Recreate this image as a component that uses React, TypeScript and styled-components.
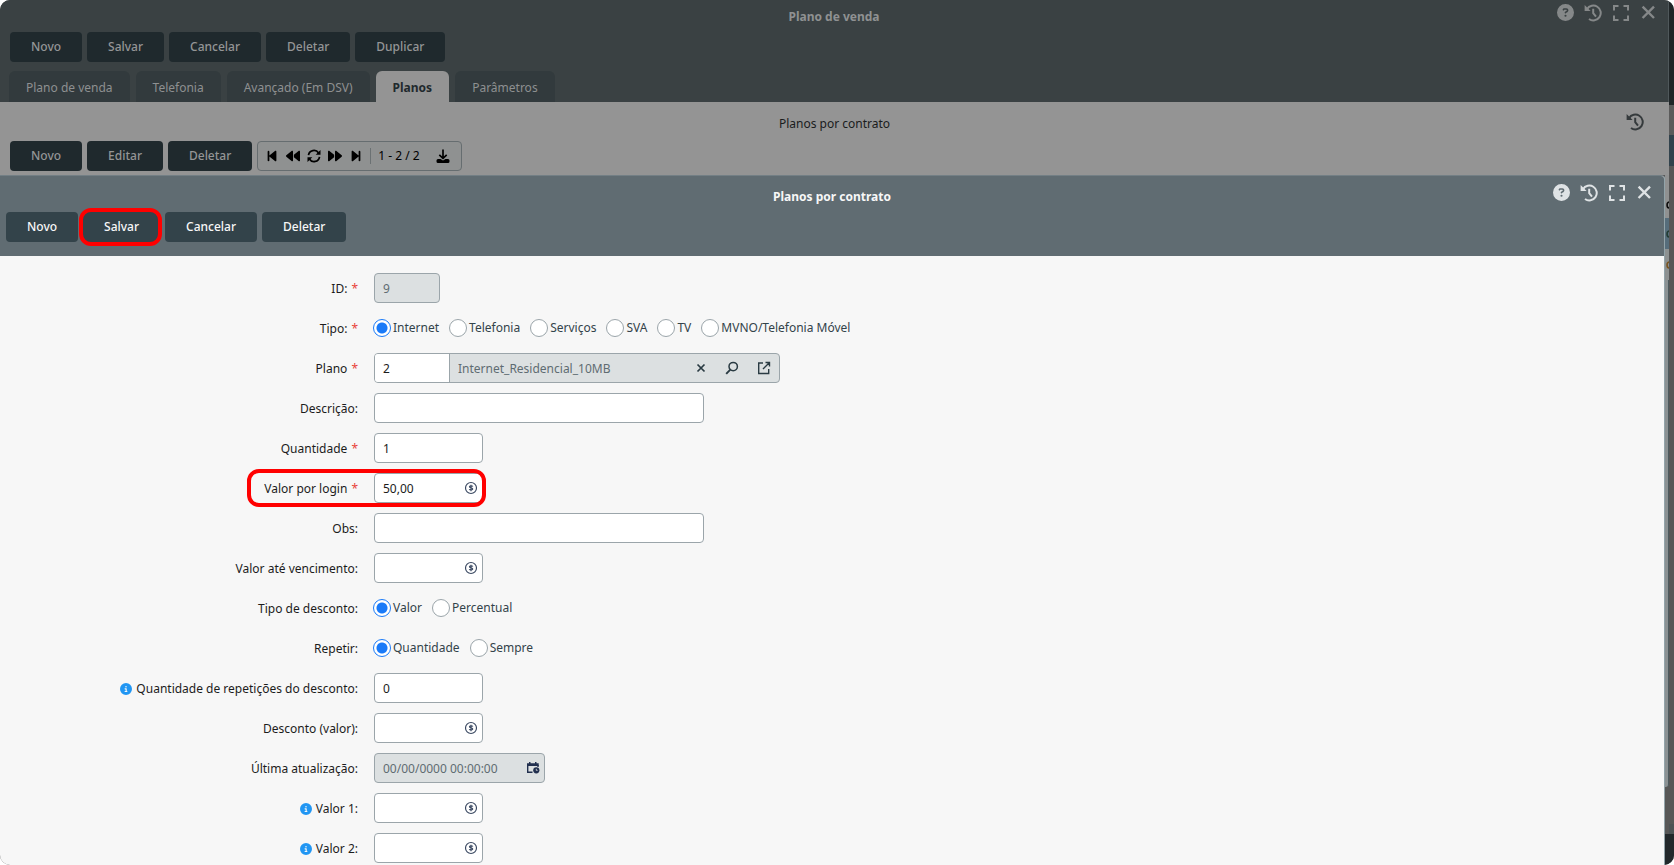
import React, { useId } from "react";
import styled, { createGlobalStyle, css } from "styled-components";
import { FaCircleQuestion, FaCircleInfo, FaBackward, FaForward, FaBackwardStep, FaForwardStep } from "react-icons/fa6";

const Global = createGlobalStyle`
  *, *::before, *::after { box-sizing: border-box; }
  body { margin: 0; background: #fff; }
  body, button, input { font-family: "Noto Sans", "Open Sans", sans-serif; font-size: 12px; line-height: 16px; }
`;

const Screen = styled.div`
  display: flex;
  height: 100vh;
  border-radius: 10px;
  overflow: hidden;
  background: #575757;
  color: #1c1c1c;
`;
const Outer = styled.main`
  flex: 1;
  min-width: 0;
  display: flex;
  flex-direction: column;
`;
const OuterHeader = styled.header`
  flex: none;
  background: #3a4143;
  height: 102px;
  padding: 0 10px;
  display: flex;
  flex-direction: column;
  border-right: 1px solid #50585b;
`;
const TitleBar = styled.div<{ $h: number }>`
  height: ${(p) => p.$h}px;
  display: grid;
  grid-template-columns: 1fr auto 1fr;
`;
const Title = styled.h1<{ $color: string; $plain?: boolean; $top: number }>`
  grid-column: 2;
  margin: 0;
  padding-top: ${(p) => p.$top}px;
  font-size: 12px;
  line-height: 16px;
  font-weight: ${(p) => (p.$plain ? 400 : 700)};
  color: ${(p) => p.$color};
`;
const Tools = styled.div<{ $color: string; $top: number; $right: number }>`
  justify-self: end;
  display: flex;
  align-items: flex-start;
  gap: 10px;
  padding-top: ${(p) => p.$top}px;
  padding-right: ${(p) => p.$right}px;
  color: ${(p) => p.$color};
`;
const IconButton = styled.button`
  display: flex;
  padding: 0;
  border: 0;
  background: none;
  color: inherit;
  cursor: pointer;
`;
const Bar = styled.div`
  display: flex;
  gap: 5px;
`;
const Button = styled.button<{ $dim?: boolean }>`
  height: 30px;
  padding: 0 21px;
  border: 0;
  border-radius: 4px;
  font-weight: 500;
  white-space: nowrap;
  background: ${(p) => (p.$dim ? "#1f292d" : "#33434a")};
  color: ${(p) => (p.$dim ? "#949596" : "#f7f7f7")};
`;
const Highlight = styled.span`
  position: relative;
  display: inline-flex;
  &::after {
    content: "";
    position: absolute;
    inset: -4px -2px -4px -4px;
    border: 4px solid #f00;
    border-radius: 12px;
    pointer-events: none;
  }
`;
const Tabs = styled.div`
  display: flex;
  gap: 6px;
  margin: auto 0 0 -1px;
`;
const Tab = styled.button<{ $active?: boolean }>`
  height: 31px;
  padding: 1px 16px 0;
  border: 1px solid transparent;
  border-bottom: 0;
  border-radius: 6px 6px 0 0;
  background: #323a3d;
  color: #8e9091;
  ${(p) =>
    p.$active &&
    css`
      background: #949494;
      color: #1f292d;
      font-weight: 700;
    `}
`;
const Grid = styled.section`
  flex: none;
  height: 73px;
  padding: 0 10px;
  background: #949494;
`;
const Pager = styled.div`
  display: flex;
  align-items: center;
  gap: 7px;
  height: 30px;
  width: 205px;
  padding-left: 7px;
  border: 1px solid #666d70;
  border-radius: 4px;
  background: #8f9191;
  color: #000;
`;
const PagerText = styled.span`
  padding: 0 9px 0 7px;
  border-left: 1px solid #6b7173;
`;
const DialogRow = styled.div`
  flex: 1;
  min-height: 0;
  display: flex;
`;
const Dialog = styled.section`
  flex: 1;
  min-width: 0;
  display: flex;
  flex-direction: column;
  border-top: 1px solid #737f85;
  border-right: 1px solid #93a4aa;
  border-top-right-radius: 4px;
  background: #f7f7f7;
  overflow: hidden;
`;
const DialogHeader = styled.header`
  flex: none;
  height: 80px;
  padding: 0 6px;
  background: #606c72;
`;
const Form = styled.form`
  display: flex;
  flex-direction: column;
  gap: 10px;
  padding-top: 17px;
`;
const Row = styled.div`
  height: 30px;
  display: grid;
  grid-template-columns: 358px 1fr;
  column-gap: 16px;
  align-items: center;
`;
const Label = styled.label`
  display: flex;
  align-items: center;
  justify-content: flex-end;
  gap: 4px;
  padding-top: 2px;
  white-space: nowrap;
`;
const Star = styled.span`
  color: #e8433a;
`;
const Info = styled(FaCircleInfo)`
  color: #2196f3;
`;
const Box = styled.div<{ $w: number; $off?: boolean }>`
  display: flex;
  align-items: center;
  width: ${(p) => p.$w}px;
  height: 30px;
  border: 1px solid #9ba5aa;
  border-radius: 4px;
  background: ${(p) => (p.$off ? "#dce0e1" : "#fff")};
  overflow: hidden;
`;
const Input = styled.input<{ $split?: boolean }>`
  flex: 1;
  min-width: 0;
  height: 28px;
  padding: 1px 8px 0;
  border: 0;
  outline: 0;
  background: transparent;
  color: #1c1c1c;
  &:disabled { color: #5f6c72; }
  ${(p) =>
    p.$split &&
    css`
      border-left: 1px solid #9ba5aa;
      background: #dce0e1;
    `}
`;
const Code = styled.input`
  width: 74px;
  height: 28px;
  padding: 1px 8px 0;
  border: 0;
  background: #fff;
  color: #1c1c1c;
`;
const Adorn = styled.span<{ $gap?: number }>`
  display: flex;
  align-items: center;
  gap: ${(p) => p.$gap ?? 0}px;
  padding-right: ${(p) => (p.$gap ? 8 : 4)}px;
  color: #2a3b43;
`;
const Options = styled.div`
  display: flex;
  gap: 11px;
`;
const Option = styled.label`
  display: flex;
  align-items: center;
  gap: 2px;
  margin-left: -1px;
  color: #33434a;
`;
const Radio = styled.input`
  appearance: none;
  width: 18px;
  height: 18px;
  margin: 0;
  border: 1px solid #9ba5aa;
  border-radius: 50%;
  background: #fff;
  &:checked {
    border-color: #1a7af8;
    background: radial-gradient(circle, #1a7af8 5px, #fff 6px);
  }
`;
const Strip = styled.aside<{ $w: number }>`
  flex: none;
  width: ${(p) => p.$w}px;
  display: flex;
  flex-direction: column;
`;
const Seg = styled.div<{ $h?: number; $c: string; $edge?: boolean }>`
  display: flex;
  align-items: center;
  justify-content: flex-end;
  overflow: hidden;
  ${(p) => (p.$h ? `height: ${p.$h}px; flex: none;` : "flex: 1;")}
  background: ${(p) => p.$c};
  ${(p) => p.$edge && "border-right: 1px solid #4d5a5e; border-bottom-right-radius: 3px;"}
`;
const Sliver = ({ color }: { color: string }) => (
  <svg width="3" height="8" viewBox="0 0 3 8" fill="none" stroke={color} strokeWidth="1.6">
    <path d="M3 1C.4 1.400.4 6.600 3 7" />
  </svg>
);

const History = () => (
  <svg width="18" height="18" viewBox="0 0 18 18" fill="none" stroke="currentColor" strokeWidth="2">
    <path d="M3 5.200A7.400 7.400 0 1 1 5 15" />
    <path d="M.6 1v6h6z" fill="currentColor" stroke="none" />
    <path d="M9.200 4.800v4.400l2.800 3.400" />
  </svg>
);
const Expand = () => (
  <svg width="18" height="18" viewBox="0 0 18 18" fill="none" stroke="currentColor" strokeWidth="2">
    <path d="M2 6.500V2h4.500M11.500 2H16v4.500M16 11.500V16h-4.500M6.500 16H2v-4.500" />
  </svg>
);
const Cross = () => (
  <svg width="17" height="17" viewBox="0 0 17 17" fill="none" stroke="currentColor" strokeWidth="2.400">
    <path d="M2.600 2.600l11.400 11.400M14 2.600L2.600 14" />
  </svg>
);
const Money = () => (
  <svg width="14" height="14" viewBox="0 0 14 14" fill="none" stroke="#3c4a63">
    <circle cx="7" cy="7" r="5.500" strokeWidth="1.200" />
    <path d="M8.900 5.500C8.400 4.700 5.400 4.500 5.400 5.800c0 1.400 3.400.8 3.400 2.300 0 1.300-3 1.200-3.600.2M7 3.800v6.400" strokeWidth="1.100" />
  </svg>
);
const Calendar = () => (
  <svg width="14" height="14" viewBox="0 0 14 14">
    <path d="M1.700 4v7.300H6.500M12 4v2" fill="none" stroke="#22304f" strokeWidth="1.400" />
    <path d="M1 2.300h11.700v2.700H1zM3 1h1.500v2H3zM9 1h1.500v2H9z" fill="#22304f" />
    <circle cx="10.300" cy="9.300" r="3.100" fill="#22304f" />
    <path d="M10.300 7.800v1.600h1.300" fill="none" stroke="#dce0e1" strokeWidth=".8" />
  </svg>
);
const Refresh = () => (
  <svg width="14" height="14" viewBox="0 0 14 14" fill="none" stroke="currentColor" strokeWidth="1.700">
    <path d="M1.500 6.200A5.500 5.500 0 0 1 11.600 4M12.500 7.800A5.500 5.500 0 0 1 2.400 10" />
    <path d="M13.500 1v4.800H8.700zM.5 13V8.200h4.800z" fill="currentColor" stroke="none" />
  </svg>
);
const Download = () => (
  <svg width="14" height="15" viewBox="0 0 14 15" fill="none" stroke="currentColor">
    <path d="M7 .5v8.500M3.300 5.800L7 9.300l3.700-3.500" strokeWidth="1.700" />
    <path d="M2 10h2.500L7 11.500 9.500 10H12a1.500 1.500 0 0 1 1.500 1.500v1A1.500 1.500 0 0 1 12 14H2a1.500 1.500 0 0 1-1.500-1.500v-1A1.500 1.500 0 0 1 2 10z" fill="currentColor" stroke="none" />
  </svg>
);
const Clear = () => (
  <svg width="12" height="10" viewBox="0 0 12 10" stroke="currentColor" strokeWidth="1.700">
    <path d="M2.500 1.500l7 7M9.500 1.500l-7 7" />
  </svg>
);
const Search = () => (
  <svg width="14" height="14" viewBox="0 0 14 14" fill="none" stroke="currentColor" strokeWidth="1.500">
    <circle cx="8.200" cy="5.600" r="4.200" />
    <path d="M5.300 8.600L1.200 12.800" strokeWidth="1.900" />
  </svg>
);
const Open = () => (
  <svg width="14" height="14" viewBox="0 0 14 14" fill="none" stroke="currentColor" strokeWidth="1.400">
    <path d="M6 2H1.700v10.500h10V8M8.500 1.500h4v4M12.500 1.500L6 8" />
  </svg>
);

const WindowTools = (p: { color: string; top: number; right: number }) => (
  <Tools $color={p.color} $top={p.top} $right={p.right}>
    <IconButton type="button" aria-label="Ajuda"><FaCircleQuestion size={17} /></IconButton>
    <IconButton type="button" aria-label="Histórico"><History /></IconButton>
    <IconButton type="button" aria-label="Expandir"><Expand /></IconButton>
    <IconButton type="button" aria-label="Fechar"><Cross /></IconButton>
  </Tools>
);

type FieldProps = {
  label: string;
  required?: boolean;
  info?: boolean;
  w?: number;
  value?: string;
  off?: boolean;
  icon?: React.ReactNode;
};
const Caption = (p: { id: string; label: string; required?: boolean; info?: boolean }) => (
  <Label htmlFor={p.id}>
    {p.info && <Info size={12} />}
    {p.label}
    {p.required && <Star>*</Star>}
  </Label>
);
const Field = (p: FieldProps) => {
  const id = useId();
  return (
    <Row>
      <Caption id={id} label={p.label} required={p.required} info={p.info} />
      <Box $w={p.w ?? 109} $off={p.off}>
        <Input id={id} defaultValue={p.value} disabled={p.off} />
        {p.icon && <Adorn>{p.icon}</Adorn>}
      </Box>
    </Row>
  );
};
const RadioField = (p: { label: string; required?: boolean; options: string[] }) => {
  const id = useId();
  return (
    <Row>
      <Caption id={id} label={p.label} required={p.required} />
      <Options>
        {p.options.map((o, i) => (
          <Option key={o}>
            <Radio type="radio" name={id} id={i === 0 ? id : undefined} defaultChecked={i === 0} />
            {o}
          </Option>
        ))}
      </Options>
    </Row>
  );
};
const Marked = styled.div`
  position: relative;
  &::after {
    content: "";
    position: absolute;
    left: 247px;
    top: -4px;
    width: 239px;
    height: 38px;
    border: 4px solid #f00;
    border-radius: 12px;
    pointer-events: none;
  }
`;

export default function App() {
  return (
    <>
      <Global />
      <Screen>
        <Outer>
          <OuterHeader>
            <TitleBar $h={32}>
              <Title $color="#8f9192" $top={9}>Plano de venda</Title>
              <WindowTools color="#858889" top={4} right={1} />
            </TitleBar>
            <Bar>
              {["Novo", "Salvar", "Cancelar", "Deletar", "Duplicar"].map((t) => <Button key={t} $dim>{t}</Button>)}
            </Bar>
            <Tabs>
              {["Plano de venda", "Telefonia", "Avançado (Em DSV)", "Planos", "Parâmetros"].map((t) => (
                <Tab key={t} $active={t === "Planos"}>{t}</Tab>
              ))}
            </Tabs>
          </OuterHeader>
          <Grid>
            <TitleBar $h={39}>
              <Title as="h2" $plain $color="#1a1c1d" $top={14}>Planos por contrato</Title>
              <Tools $color="#353a3c" $top={11} $right={15}>
                <IconButton type="button" aria-label="Histórico"><History /></IconButton>
              </Tools>
            </TitleBar>
            <Bar>
              {["Novo", "Editar", "Deletar"].map((t) => <Button key={t} $dim>{t}</Button>)}
              <Pager>
                <IconButton aria-label="Primeira"><FaBackwardStep size={14} /></IconButton>
                <IconButton aria-label="Anterior"><FaBackward size={14} /></IconButton>
                <IconButton aria-label="Atualizar"><Refresh /></IconButton>
                <IconButton aria-label="Próxima"><FaForward size={14} /></IconButton>
                <IconButton aria-label="Última"><FaForwardStep size={14} /></IconButton>
                <PagerText>1 - 2 / 2</PagerText>
                <IconButton aria-label="Baixar"><Download /></IconButton>
              </Pager>
            </Bar>
          </Grid>
          <DialogRow>
            <Dialog>
              <DialogHeader>
                <TitleBar $h={36}>
                  <Title as="h2" $color="#f7f7f7" $top={13}>Planos por contrato</Title>
                  <WindowTools color="#dfe3e5" top={8} right={5} />
                </TitleBar>
                <Bar>
                  <Button>Novo</Button>
                  <Highlight><Button>Salvar</Button></Highlight>
                  <Button>Cancelar</Button>
                  <Button>Deletar</Button>
                </Bar>
              </DialogHeader>
              <Form>
                <Field label="ID:" required w={66} value="9" off />
                <RadioField label="Tipo:" required options={["Internet", "Telefonia", "Serviços", "SVA", "TV", "MVNO/Telefonia Móvel"]} />
                <Row>
                  <Caption id="plano" label="Plano" required />
                  <Box $w={406} $off>
                    <Code id="plano" defaultValue="2" />
                    <Input $split disabled aria-label="Nome do plano" defaultValue="Internet_Residencial_10MB" />
                    <Adorn $gap={18}>
                      <IconButton type="button" aria-label="Limpar"><Clear /></IconButton>
                      <IconButton type="button" aria-label="Buscar"><Search /></IconButton>
                      <IconButton type="button" aria-label="Abrir"><Open /></IconButton>
                    </Adorn>
                  </Box>
                </Row>
                <Field label="Descrição:" w={330} />
                <Field label="Quantidade" required value="1" />
                <Marked><Field label="Valor por login" required value="50,00" icon={<Money />} /></Marked>
                <Field label="Obs:" w={330} />
                <Field label="Valor até vencimento:" icon={<Money />} />
                <RadioField label="Tipo de desconto:" options={["Valor", "Percentual"]} />
                <RadioField label="Repetir:" options={["Quantidade", "Sempre"]} />
                <Field label="Quantidade de repetições do desconto:" info value="0" />
                <Field label="Desconto (valor):" icon={<Money />} />
                <Field label="Última atualização:" w={171} value="00/00/0000 00:00:00" off icon={<Calendar />} />
                <Field label="Valor 1:" info icon={<Money />} />
                <Field label="Valor 2:" info icon={<Money />} />
              </Form>
            </Dialog>
            <Strip $w={4}>
              <Seg $h={17} $c="#909191" />
              <Seg $h={26} $c="#909191"><Sliver color="#0c0c0c" /></Seg>
              <Seg $h={31} $c="#566d7b"><Sliver color="#223c33" /></Seg>
              <Seg $h={31} $c="#8d9191"><Sliver color="#7a5420" /></Seg>
              <Seg $c="#8b9193" $edge />
              <Seg $h={47} $c="#575757" />
              <Seg $h={31} $c="#22282b" />
            </Strip>
          </DialogRow>
        </Outer>
        <Strip $w={5}>
          <Seg $h={105} $c="#202628" />
          <Seg $h={30} $c="#5b5b5b" />
          <Seg $h={31} $c="#31424c" />
          <Seg $c="#575757" />
          <Seg $h={10} $c="#4d5355" />
          <Seg $h={31} $c="#22282b" />
        </Strip>
      </Screen>
    </>
  );
}
